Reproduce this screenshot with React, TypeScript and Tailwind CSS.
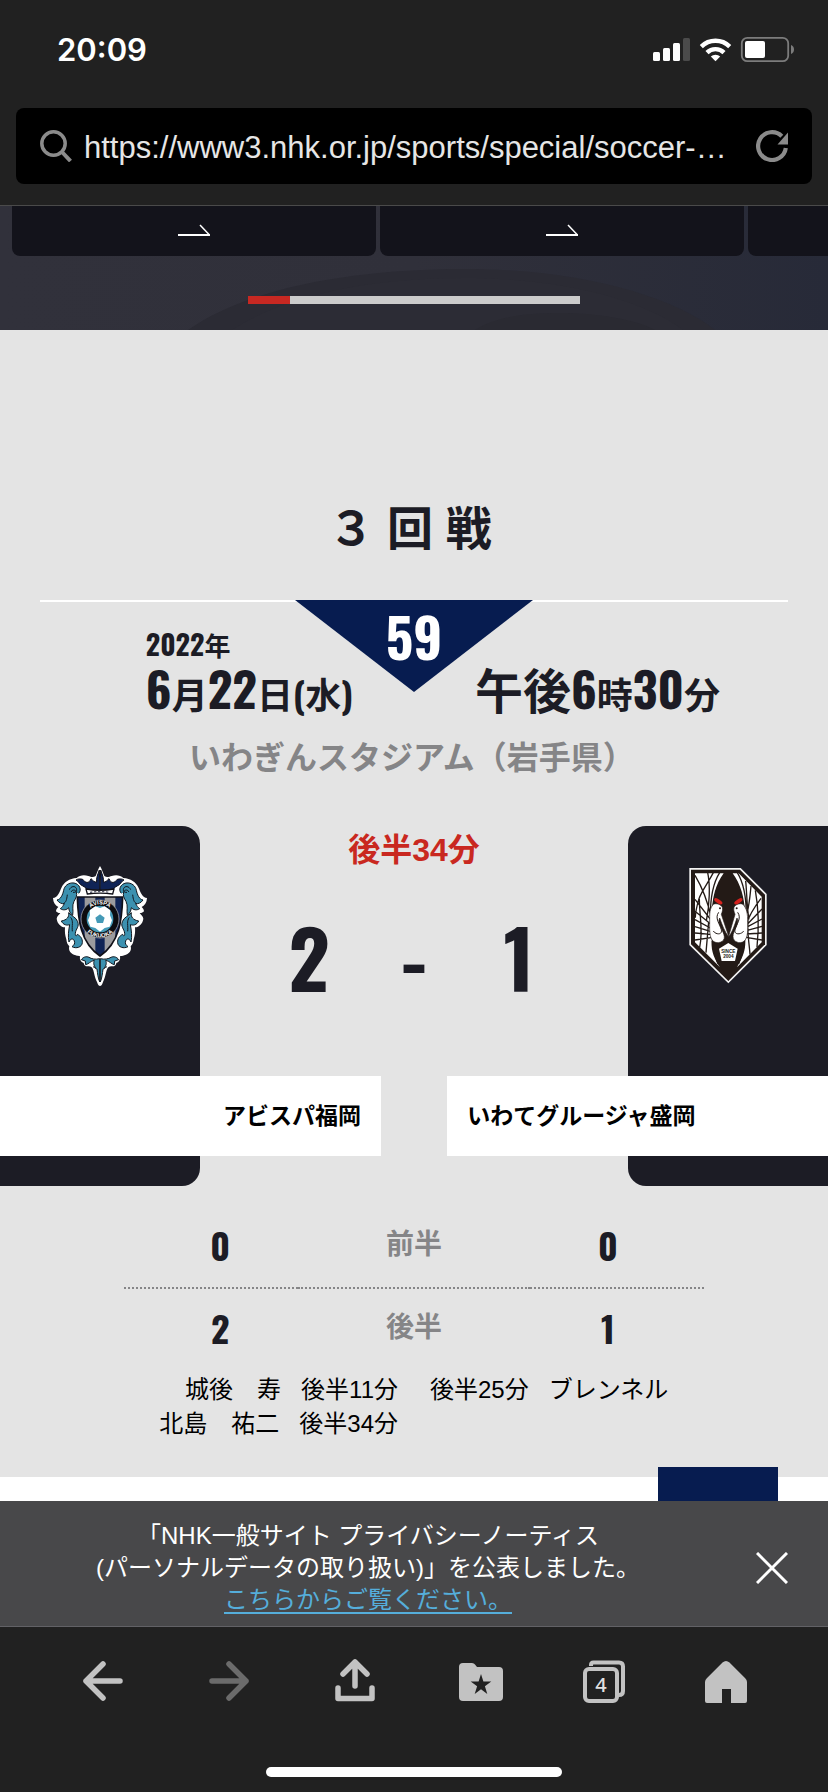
import type { ReactNode } from "react";

const sans = "font-['Liberation_Sans','Noto_Sans_CJK_JP',sans-serif]";
const narrow = "font-['Oswald','Liberation_Sans_Narrow','Roboto_Condensed','Noto_Sans_CJK_JP',sans-serif] font-bold";

function StatusBar() {
  return (
    <div className="flex h-[108px] items-start justify-between pt-7 pr-[34px] pl-[57px]">
      <time className="font-['Inter',sans-serif] text-[31px] leading-[44px] font-semibold text-white">20:09</time>
      <svg className="mt-[7px] h-7 w-[142px]" viewBox="652 35 142 28" aria-hidden="true">
        <g fill="#fff">
          <rect x="653" y="52" width="7" height="9" rx="1.5" />
          <rect x="663" y="48" width="7" height="13" rx="1.5" />
          <rect x="673" y="43" width="7" height="18" rx="1.5" />
          <rect x="683" y="38" width="7" height="23" rx="1.5" fill="#4b4b4b" />
          <path d="M715.500 61.300l-4.700-4.700a6.800 6.800 0 0 1 9.400 0z" />
        </g>
        <g fill="none" stroke="#fff" strokeWidth="4.400">
          <path d="M701.300 46.600a20.300 20.300 0 0 1 28.400 0" />
          <path d="M707 52.600a12.200 12.200 0 0 1 17 0" />
        </g>
        <rect x="741.800" y="37.800" width="46.400" height="23.400" rx="5.500" fill="none" stroke="#7c7c7c" strokeWidth="1.800" />
        <rect x="745" y="41" width="20" height="17" rx="2" fill="#fff" />
        <path d="M791 45c4 1.500 4 7.500 0 9z" fill="#7c7c7c" />
      </svg>
    </div>
  );
}

function AddressBar() {
  return (
    <form className="mx-4 flex h-[76px] items-center rounded-lg bg-black px-6" onSubmit={(e) => e.preventDefault()}>
      <svg className="h-8 w-8 shrink-0" viewBox="0 0 32 32" fill="none" stroke="#8b8b8b" strokeWidth="3.500" aria-hidden="true">
        <circle cx="13.500" cy="13.500" r="11.700" />
        <path d="M22 22l8.500 9" strokeWidth="4" />
      </svg>
      <input
        type="text"
        aria-label="URL"
        defaultValue="https://www3.nhk.or.jp/sports/special/soccer-…"
        className="ml-3 h-12 min-w-0 flex-1 bg-transparent pt-1 text-[31px] text-[#e6e6e6] outline-none"
      />
      <button type="button" aria-label="再読み込み" className="h-8 w-8 shrink-0">
        <svg className="h-8 w-8" viewBox="0 0 32 32" aria-hidden="true">
          <path d="M29.800 18a13.900 13.900 0 1 1-4-11.800" fill="none" stroke="#8b8b8b" strokeWidth="4.200" />
          <path d="M32 2.500v12h-10.500z" fill="#8b8b8b" />
        </svg>
      </button>
    </form>
  );
}

function SlideCard() {
  return (
    <a href="#match" aria-label="詳細" className="flex h-[50px] w-[364px] shrink-0 justify-center rounded-b-lg bg-[#13131b] pt-[18px]">
      <svg className="h-3 w-8" viewBox="0 0 32 12" fill="none" stroke="#fff" aria-hidden="true">
        <path d="M0 11h32" strokeWidth="2" />
        <path d="M22 1l9 9.500" strokeWidth="1.500" />
      </svg>
    </a>
  );
}

function Carousel() {
  return (
    <div className="relative h-[124px] overflow-hidden bg-linear-to-r from-[#31313b] via-[#30303a] to-[#272a38]">
      <svg className="absolute inset-0 h-full w-full" viewBox="0 0 828 124" preserveAspectRatio="none" aria-hidden="true">
        <path d="M188 124C250 80 360 63 463 63c120 0 210 28 252 61z" fill="#2b2b34" />
        <path d="M232 124C290 86 380 72 463 72c100 0 180 22 220 52z" fill="#2c2c35" />
        <path d="M475 124c20-13 50-17 85-17s75 6 95 17z" fill="#2a2a32" />
      </svg>
      <div className="relative flex gap-1 pl-3">
        <SlideCard />
        <SlideCard />
        <SlideCard />
      </div>
      <div className="relative mx-auto mt-10 h-2 w-2/5 bg-[#cbcbcb]">
        <div className="h-2 w-1/8 bg-[#c72822]" />
      </div>
    </div>
  );
}

function AvispaCrest() {
  const half = (
    <>
      <path
        d="M180 48c-7 12-9 22-13 30-8 6-15 2-22 0-12-4-26-3-35 6-22 2-38 12-46 30-5 12-12 30-25 30 1 14 6 22 16 27-4 4-7 8-7 13 4 4 9 6 13 5-5 6-10 10-11 17 2 15 12 25 25 26-1 14 0 24 4 36 1 9 3 15 9 21-4 13 5 24 19 27 6 3 9 2 13 3-2 9 2 17 11 20 1 7 5 10 11 10 5 0 12 0 15 5 5 8 6 27 14 42 3 10 6 12 9 12z"
        fill="#fff"
      />
      <path
        d="M178 60c-5 14-10 25-8 36-7 2-11-5-17-10-3 7-7 13-13 11-5-1-9-5-12-9-7-2-14-2-20 2 8 4 8 10 14 14 8 5 15 8 20 14l38 2z"
        fill="#102456"
        stroke="#101018"
        strokeWidth="3"
      />
      <g fill="#3c91b0" stroke="#101820" strokeWidth="3" strokeLinejoin="round">
        <path d="M116 130c10-10 3-28-14-31-17-2-29 9-31 22-3 14-9 27-20 29 6 9 15 12 22 11-4 7-6 11-12 15 9 6 19 4 25-3 1 9 4 17 12 23 3-15-3-28 4-42 6-11 10-16 7-28-2-8-14-8-15 0" />
        <path d="M86 188c2 13-5 22-22 25 6 12 16 14 25 11-3 17-6 35-2 52 4-11 13-12 16-3 3 8-1 12-7 17 12 7 30 2 31-12 1-13-6-20-15-25-3 8-7 4-6-3 1-13 13-20 7-35-5-14-17-15-27-27z" />
        <path d="M179 396c-5-12-6-25-8-38-9-8-12-18-8-27-12 2-16 11-26 13l-1-11-12-4c5-8 15-11 23-7 8 5 19 7 32 4z" />
      </g>
      <path d="M88 119c5-11 17-12 21-4 3 8-2 13-10 12M92 202c9 11 3 25 5 42M159 350c5 2 9 5 10 8M82 134c-2 16-4 23-12 27" fill="none" stroke="#101820" strokeWidth="3" />
    </>
  );

  return (
    <svg className="h-[150px] w-[120px]" viewBox="0 0 360 450" role="img" aria-label="アビスパ福岡">
      <defs>
        <clipPath id="avispa-shield">
          <path d="M112 141h136c-2 68-9 137-68 177-59-40-66-109-68-177z" />
        </clipPath>
        <path id="ring-top" d="M137 206a43 43 0 0 1 86 0" />
        <path id="ring-bottom" d="M124 206a56 56 0 0 0 112 0" />
      </defs>
      {half}
      <g transform="translate(360 0) scale(-1 1)">{half}</g>
      <path d="M138 117q42 8 84 0l-4 15q-38-5-76 0z" fill="#fff" stroke="#101018" strokeWidth="4" />
      <path d="M150 127q30-5 60 0" fill="none" stroke="#55576a" strokeWidth="4" strokeDasharray="7 5" />
      <g clipPath="url(#avispa-shield)">
        <path d="M110 140h140v180H110z" fill="#9b9b9e" />
        <path d="M110 140h24v180h-24zM166 140h28v180h-28zM226 140h24v180h-24z" fill="#102456" />
      </g>
      <path d="M112 141h136c-2 68-9 137-68 177-59-40-66-109-68-177z" fill="none" stroke="#101018" strokeWidth="5" />
      <circle cx="180" cy="207" r="57" fill="#0c0c10" stroke="#b9b9bd" strokeWidth="2" />
      <g fill="#fff" fontFamily="Liberation Sans, sans-serif" fontSize="17" fontWeight="700" textAnchor="middle">
        <text><textPath href="#ring-top" startOffset="50%">AVISPA</textPath></text>
        <text><textPath href="#ring-bottom" startOffset="50%">FUKUOKA</textPath></text>
      </g>
      <circle cx="180" cy="207" r="40" fill="#459ab7" />
      <path d="M180 174l14-5 17 12-1 15 6 15-7 19-15 4-14 11-14-11-15-4-7-19 6-15-1-15 17-12z" fill="#fff" />
      <path d="M180 193l14 10-5 16h-18l-5-16z" fill="#459ab7" />
    </svg>
  );
}

function GrullaCrest() {
  return (
    <svg className="h-[150px] w-[120px]" viewBox="-6 0 360 450" role="img" aria-label="いわてグルージャ盛岡">
      <path d="M58 54h154l78 78v153L175 400 58 285z" fill="#f4f4f4" />
      <path d="M63 59h147l75 75v149L175 393 63 283z" fill="#231a16" />
      <path d="M75 70h86c-24 33-34 70-36 124v83c-2 25 9 53 25 75L75 277z" fill="#fff" />
      <path d="M188 70h18l69 70v137l-74 75c18-30 25-52 25-75v-83c-3-54-14-91-38-124z" fill="#fff" />
      <g fill="none" stroke="#231a16" strokeWidth="4">
        <path d="M75 76c23 38 37 73 49 128M130 68c-17 33-33 52-43 78-7 24-11 39-11 57M113 68c8 36 6 97-4 145M149 68c-21 33-28 76-28 130M75 148l48 62M75 184l47 38M75 209l46 25M75 230l46 14M75 249l47 4M75 270l48-7M108 308l8-93M127 273c0 26 8 43 17 68M89 292c11-51 0-84-1-145" />
        <path d="M202 68c21 34 27 78 27 128M227 93c4 37 3 76 10 115M273 145c-22 29-37 53-43 77M256 121c10 55 10 122 5 170M276 177l-47 49M276 207l-47 25M276 229l-47 13M276 249l-47 3M276 270l-48-8M240 313c-3-44-12-76-4-120M223 273c0 26-8 43-17 68M243 108c-3 31-4 50-12 82" />
      </g>
      <path d="M175 66c-24 20-38 49-44 81l-6 35 18 86 32 126 34-126 14-86-8-38c-7-31-16-59-40-78z" fill="#231a16" />
      <path d="M126 265c3 53 23 85 49 119 26-34 46-66 50-119l-25 12h-48z" fill="#231a16" />
      <g fill="#fff" stroke="#231a16" strokeWidth="2">
        <path d="M130 163c9-5 24 1 27 9 2 8 0 13-3 21l23 69c-13-16-21-38-28-58-9 17 13 39 14 56 2 16-21 23-33 14-13-12-11-36-11-57 0-27-1-40 11-54z" />
        <path d="M219 163c-9-5-24 1-27 9-2 8 0 13 3 21l-20 69c13-16 19-38 26-58 9 17-13 39-12 56 0 16 21 23 33 14 13-12 11-36 11-57 0-27-2-40-14-54z" />
      </g>
      <path d="M146 187c-13 18 4 35 8 52 4 18-19 14-24 4M203 187c13 18-4 35-8 52-4 18 21 14 26 4" fill="none" stroke="#231a16" strokeWidth="3" />
      <g fill="#d5221e">
        <ellipse cx="145" cy="154" rx="14" ry="6" transform="rotate(33 145 154)" />
        <ellipse cx="205" cy="154" rx="14" ry="6" transform="rotate(-33 205 154)" />
      </g>
      <circle cx="150" cy="175" r="3" fill="#231a16" />
      <circle cx="200" cy="175" r="3" fill="#231a16" />
      <path d="M175 279l28 17-8 37h-40l-8-37z" fill="#fff" />
      <g fill="#231a16" fontFamily="Liberation Sans, sans-serif" fontSize="14" fontWeight="700" textAnchor="middle">
        <text x="175" y="308">SINCE</text>
        <text x="175" y="323">2004</text>
      </g>
    </svg>
  );
}

function MatchInfo() {
  return (
    <div className="relative mx-10 mt-9 border-t-2 border-white pt-[26px]">
      <svg className="absolute -top-0.5 left-1/2 h-[92px] w-[238px] -translate-x-1/2" viewBox="0 0 238 92" aria-hidden="true">
        <path d="M0 0h238L119 92z" fill="#071c50" />
      </svg>
      <div className={`absolute inset-x-0 top-0.5 text-center text-[54px] leading-[64px] text-white ${narrow}`}>59</div>
      <div className="grid grid-cols-2 items-end gap-[122px]">
        <div className="justify-self-end whitespace-nowrap">
          <p className={`h-8 text-[28px] leading-8 ${narrow}`}>
            2022<span className="text-[26px]">年</span>
          </p>
          <p className={`mt-1 h-12 text-[48px] leading-[48px] ${narrow}`}>
            6<span className="text-[36px]">月</span>22<span className="text-[36px]">日(水)</span>
          </p>
        </div>
        <p className={`h-12 text-[48px] leading-[48px] whitespace-nowrap ${narrow}`}>
          午後6<span className="text-[36px]">時</span>30<span className="text-[36px]">分</span>
        </p>
      </div>
    </div>
  );
}

function TeamPanel({ className, children }: { className: string; children: ReactNode }) {
  return <div className={`row-span-3 row-start-1 flex items-start justify-center bg-[#1c1c25] pt-6 ${className}`}>{children}</div>;
}

function Scoreboard() {
  return (
    <div className="mt-12 grid grid-cols-[200px_1fr_200px] grid-rows-[250px_80px_30px]">
      <TeamPanel className="col-start-1 rounded-r-[18px]">
        <AvispaCrest />
      </TeamPanel>
      <div className="col-start-2 row-start-1 pt-1 text-center">
        <p className="text-[32px] leading-10 font-bold text-[#c92820]">後半34分</p>
        <div className={`mx-auto mt-[38px] grid w-[315px] grid-cols-3 text-[80px] leading-[96px] ${narrow}`}>
          <span>2</span>
          <span>-</span>
          <span>1</span>
        </div>
      </div>
      <TeamPanel className="col-start-3 rounded-l-[18px]">
        <GrullaCrest />
      </TeamPanel>
      <div className="col-span-3 col-start-1 row-start-2 flex justify-between text-[23px] leading-[80px] font-bold text-black">
        <h2 className="w-[46%] bg-white pr-5 text-right">アビスパ福岡</h2>
        <h2 className="w-[46%] bg-white pl-5">いわてグルージャ盛岡</h2>
      </div>
    </div>
  );
}

const halves = [
  { label: "前半", home: 0, away: 0 },
  { label: "後半", home: 2, away: 1 },
];

const homeGoals = [
  { player: "城後　寿", time: "後半11分" },
  { player: "北島　祐二", time: "後半34分" },
];

const awayGoals = [{ player: "ブレンネル", time: "後半25分" }];

function Details() {
  return (
    <>
      <table className="mx-auto mt-5 w-[70%] table-fixed border-collapse text-center">
        <tbody>
          {halves.map((half) => (
            <tr key={half.label} className="h-[82px] border-[#858587] not-last:border-b-2 not-last:border-dotted">
              <td className={`w-[30%] pb-1 pl-[18px] text-[36px] leading-[48px] ${narrow}`}>{half.home}</td>
              <th scope="row" className="pb-1 text-[28px] leading-9 font-bold text-[#858587]">{half.label}</th>
              <td className={`w-[30%] pr-[18px] pb-1 text-[36px] leading-[48px] ${narrow}`}>{half.away}</td>
            </tr>
          ))}
        </tbody>
      </table>
      <div className="grid grid-cols-2 gap-8 pt-[3px] pb-9 text-[24px] leading-[34px] text-black">
        <ul>
          {homeGoals.map((goal) => (
            <li key={goal.player} className="flex justify-end gap-5">
              <span>{goal.player}</span>
              <span>{goal.time}</span>
            </li>
          ))}
        </ul>
        <ul>
          {awayGoals.map((goal) => (
            <li key={goal.player} className="flex gap-5">
              <span>{goal.time}</span>
              <span>{goal.player}</span>
            </li>
          ))}
        </ul>
      </div>
    </>
  );
}

function PrivacyNotice() {
  return (
    <aside className="flex h-[126px] items-center justify-between border-b border-[#626266] bg-[#48484a] pt-2 pr-10">
      <p className="w-[736px] text-center text-[24px] leading-8 text-white">
        「NHK一般サイト プライバシーノーティス
        <br />
        (パーソナルデータの取り扱い)」を公表しました。
        <br />
        <a href="#privacy" className="text-[#55aedb] underline underline-offset-4">こちらからご覧ください。</a>
      </p>
      <button type="button" aria-label="閉じる" className="h-8 w-8 shrink-0">
        <svg className="h-8 w-8" viewBox="0 0 32 32" stroke="#fff" strokeWidth="3" aria-hidden="true">
          <path d="M1 1l30 30M31 1L1 31" />
        </svg>
      </button>
    </aside>
  );
}

function NavButton({ label, children }: { label: string; children: ReactNode }) {
  return (
    <button type="button" aria-label={label} className="h-14 w-14">
      <svg className="h-14 w-14" viewBox="0 0 56 56" fill="none" stroke="#c2c2c2" strokeWidth="5.500" strokeLinecap="round" strokeLinejoin="round" aria-hidden="true">
        {children}
      </svg>
    </button>
  );
}

function BrowserNav() {
  return (
    <nav className="flex h-[166px] flex-col bg-[#212121] pt-[26px]">
      <div className="flex justify-between px-[74px]">
        <NavButton label="戻る">
          <path d="M29 11L12 28l17 17M12 28h34" />
        </NavButton>
        <NavButton label="進む">
          <path d="M30 11l17 17-17 17M47 28H13" stroke="#6b6b6b" />
        </NavButton>
        <NavButton label="共有">
          <path d="M31 33V9M19 21L31 9l12 12M14 35v10.500h34V35" />
        </NavButton>
        <NavButton label="ブックマーク">
          <path d="M15 10h9q2 0 3 1.500l2 2.500h22q4 0 4 4v26q0 4-4 4H15q-4 0-4-4V14q0-4 4-4z" fill="#c2c2c2" stroke="none" />
          <path d="M33 21l2.400 7.600h7.900l-6.400 4.700 2.400 7.700-6.300-4.700-6.300 4.700 2.400-7.700-6.400-4.700h7.900z" fill="#212121" stroke="none" />
        </NavButton>
        <NavButton label="タブ">
          <path d="M18 13v-1q0-2.500 2.500-2.500H46q4 0 4 4V38q0 4-4 4" strokeWidth="4" strokeLinecap="butt" />
          <rect x="12" y="16" width="32" height="32" rx="4" strokeWidth="4" />
          <text x="28" y="39" fill="#e0e0e0" stroke="none" fontFamily="Noto Sans, sans-serif" fontSize="20" fontWeight="500" textAnchor="middle">4</text>
        </NavButton>
        <NavButton label="ホーム">
          <path d="M24.500 9.500q3.500-3 7 0L47 25q2 2 2 4v19q0 2-2 2H33V36h-9v14H9q-2 0-2-2V29q0-2 2-4z" fill="#c2c2c2" stroke="none" />
        </NavButton>
      </div>
      <div className="mx-auto mt-auto mb-4 h-2.5 w-[296px] rounded-full bg-white" />
    </nav>
  );
}

export default function App() {
  return (
    <div className={`w-full overflow-hidden bg-[#212121] text-[#1c1c25] ${sans}`}>
      <header className="h-[206px] border-b border-[#4a4a4a]">
        <StatusBar />
        <AddressBar />
      </header>
      <Carousel />
      <main id="match" className="bg-[#e4e4e4] pt-[164px]">
        <h1 className="h-[70px] pr-2 text-center text-[46px] leading-[70px] font-bold">３ 回 戦</h1>
        <MatchInfo />
        <p className="mt-[26px] pr-1 text-center text-[32px] leading-10 font-bold text-[#858587]">いわぎんスタジアム（岩手県）</p>
        <Scoreboard />
        <Details />
      </main>
      <div className="flex h-6 justify-end bg-white pr-[50px]">
        <div className="-mt-2.5 h-[34px] w-[120px] bg-[#071c50]" />
      </div>
      <PrivacyNotice />
      <BrowserNav />
    </div>
  );
}
